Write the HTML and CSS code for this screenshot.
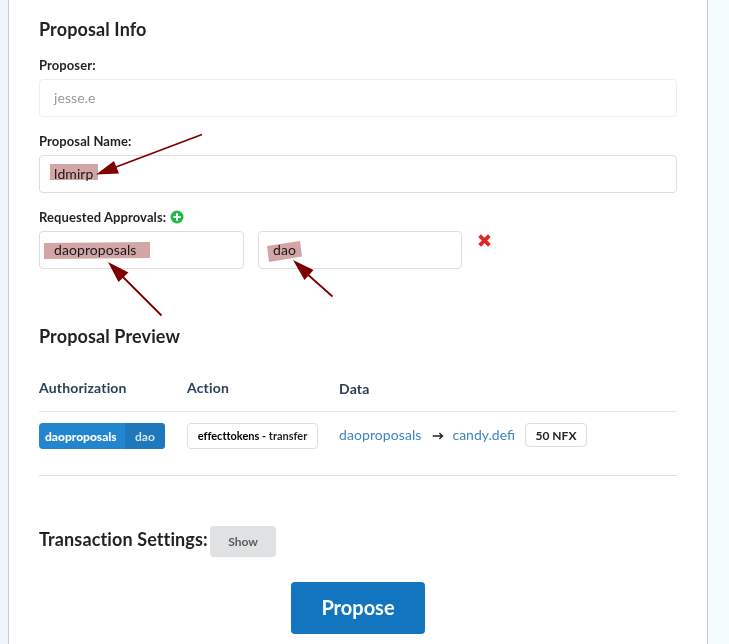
FILE: index.html
```html
<!DOCTYPE html>
<html lang="en">
<head>
<meta charset="utf-8">
<title>Proposal</title>
<link rel="stylesheet" href="styles.css">
</head>
<body>
<main class="card">
  <h3 class="heading">Proposal Info</h3>
  <div class="field">
    <label class="label">Proposer:</label>
    <div class="input disabled">jesse.e</div>
  </div>
  <div class="field">
    <label class="label">Proposal Name:</label>
    <div class="input"><span class="value">ldmirp</span></div>
  </div>
  <div class="field">
    <label class="label">Requested Approvals:
      <svg class="plus" viewBox="0 0 14 14"><circle cx="7" cy="7" r="6.500" fill="#21ba45"/><path d="M7 3.300v7.400M3.300 7h7.400" stroke="#fff" stroke-width="2"/></svg>
    </label>
    <div class="approvals">
      <div class="input">daoproposals</div>
      <div class="input">dao</div>
      <svg class="remove" viewBox="0 0 12 12"><path d="M2.800 2.800l6.400 6.400M9.200 2.800l-6.400 6.400" stroke="#db2828" stroke-width="3.600" stroke-linecap="square"/></svg>
    </div>
  </div>
  <h3 class="heading preview-heading">Proposal Preview</h3>
  <section class="table">
    <div class="row head"><span>Authorization</span><span>Action</span><span class="data-title">Data</span></div>
    <div class="row body">
      <div><span class="auth"><b>daoproposals</b><span class="perm">dao</span></span></div>
      <div><span class="tag action"><span class="contract">effecttokens -</span>&nbsp;transfer</span></div>
      <div class="transfer"><a>daoproposals</a>
        <svg class="arrow" viewBox="0 0 12 10"><path d="M.7 5h9.500M7.400 2.100L10.500 5 7.400 7.900" fill="none" stroke="#222" stroke-width="1.400"/></svg>
        <a class="to">candy.defi</a><span class="tag amount">50 NFX</span></div>
    </div>
  </section>
  <div class="settings"><h3 class="heading">Transaction Settings:</h3><button class="show">Show</button></div>
  <div class="submit"><button class="propose">Propose</button></div>
</main>
<svg class="marks" viewBox="0 0 729 644">
  <g fill="#d2a5a6">
    <path d="M50 164h48v16H50zM44 243l106-1v16l-106 1zM267 246l33-5 2 15.500-33 5.500z"/>
  </g>
  <g stroke="#800000" stroke-width="1.800"><path d="M202 134.500L112 168.500M161.500 315.500L120 274M332.500 296.500L306 273"/></g>
  <path fill="#800000" d="M96 174.500L114 161L119 173.500zM108 262L128.500 272.500L118.500 282zM293 260L313.500 270L304.500 280z"/>
</svg>
</body>
</html>
```
FILE: styles.css
```css
* { box-sizing: border-box; }
body {
  margin: 0;
  height: 644px;
  overflow: hidden;
  padding-left: 8px;
  background: linear-gradient(90deg, #f0f4fd, #f3fcfb);
  font: 14px/20px Lato, "Liberation Sans", sans-serif;
  color: rgba(0, 0, 0, .87);
}
.card {
  width: 700px;
  height: 644px;
  padding: 18px 30px 0;
  background: #fff;
  border: solid #ccc;
  border-width: 0 1px;
}
.heading {
  margin: 0;
  font-size: 18px;
  line-height: 23px;
  font-weight: 700;
  font-variant-ligatures: none;
  letter-spacing: .12px;
}
.card > .heading:first-child { margin-bottom: 15px; }
.field { margin-bottom: 15px; }
.label {
  display: flex;
  align-items: center;
  height: 18px;
  margin-bottom: 5px;
  font-size: 13px;
  font-weight: 700;
  letter-spacing: .09px;
}
.plus { width: 14px; height: 14px; margin-left: 4px; }
.input {
  height: 38px;
  padding: 9px 14px;
  line-height: 18px;
  letter-spacing: .08px;
  border: 1px solid #dededf;
  border-radius: 4px;
}
.disabled { border-color: #eee; color: #999; }
.approvals { display: flex; }
.approvals .input { width: 205px; margin-right: 14px; }
.approvals .input + .input { width: 204px; margin-right: 16px; }
.remove { width: 13px; height: 13px; margin-top: 3px; }
.preview-heading { margin-top: 56px; }
.table { margin-top: 20px; border-bottom: 1px solid #dedede; }
.row { display: grid; grid-template-columns: 148px 152px 1fr; }
.head {
  height: 44px;
  padding-top: 10px;
  border-bottom: 1px solid #e6e6e6;
  color: #2c405a;
  font-weight: 700;
  font-variant-ligatures: none;
  letter-spacing: .16px;
}
.data-title { padding-top: 1px; }
.body { height: 63px; padding-top: 11px; }
.auth {
  display: inline-flex;
  width: 126px;
  height: 26px;
  overflow: hidden;
  border-radius: 4px;
  background: #2185d0;
  color: #fff;
  font-size: 12px;
  font-weight: 700;
  line-height: 27px;
}
.auth b { width: 86px; padding-left: 6px; }
.perm { flex: 1; padding-left: 10px; background: #1e78bb; color: #d2e4f1; }
.tag {
  display: inline-flex;
  align-items: center;
  justify-content: center;
  border: 1px solid #dededf;
  border-radius: 4px;
  font-weight: 700;
  white-space: nowrap;
}
.action { width: 131px; height: 26px; font-size: 11px; font-variant-ligatures: none; }
.contract { color: #000; }
.transfer { display: flex; align-items: center; height: 24px; }
.transfer a { color: #4183c4; }
.transfer a:first-child { letter-spacing: .08px; }
.arrow { width: 12px; height: 10px; margin: 1px 8px 0 11px; }
.amount { width: 62px; height: 24px; margin-left: 10px; padding-top: 1px; font-size: 12px; }
.settings { display: flex; margin-top: 50px; gap: 3px; }
.settings .heading { width: 168px; padding-top: 2px; white-space: nowrap; }
button { border: 0; border-radius: 4px; font-family: inherit; font-weight: 700; }
.show { width: 66px; height: 31px; padding: 0; background: #e0e1e2; color: #5a5a5a; font-size: 12px; }
.submit { display: flex; justify-content: center; margin-top: 25px; }
.propose { width: 134px; height: 52px; padding-bottom: 3px; background: #1175c0; color: #fff; font-size: 20px; }
.marks {
  position: absolute;
  top: 0;
  left: 0;
  width: 729px;
  height: 644px;
  pointer-events: none;
  mix-blend-mode: multiply;
}
```
